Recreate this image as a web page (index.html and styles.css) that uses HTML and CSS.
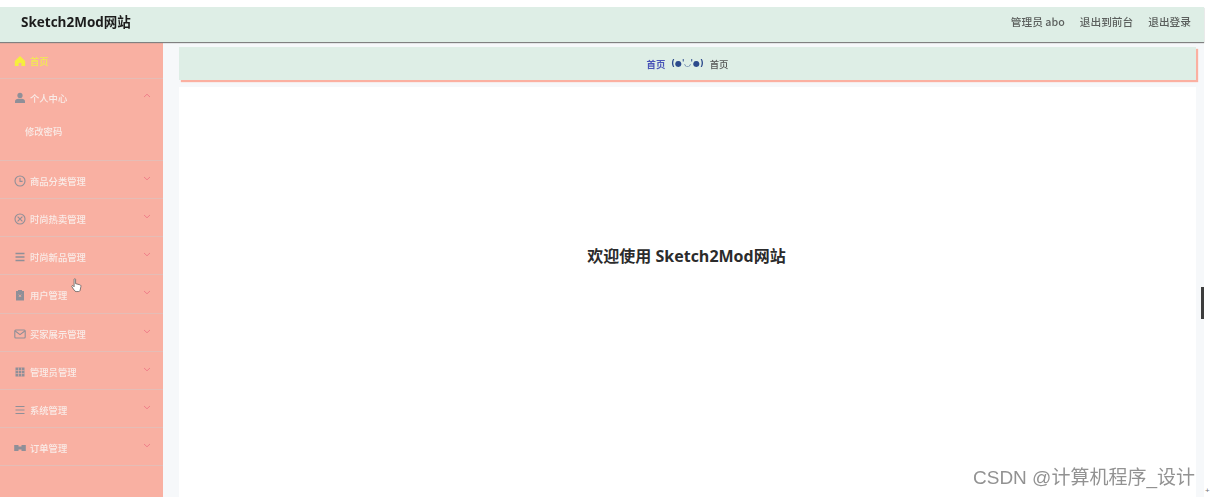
FILE: index.html
```html
<!DOCTYPE html>
<html lang="zh">
<head>
<meta charset="utf-8">
<title>Sketch2Mod网站</title>
<link rel="stylesheet" href="styles.css">
</head>
<body>
<div class="page">
  <header class="topbar">
    <div class="brand">Sketch2Mod网站</div>
    <nav class="toplinks"><span>管理员 abo</span><span>退出到前台</span><span>退出登录</span></nav>
  </header>
  <div class="body-row">
    <aside class="sidebar">
      <div class="item home">
        <svg class="ico" viewBox="0 0 12 12"><path d="M6 1 L11.2 6 V11 H7.4 V8 H4.6 V11 H.8 V6 Z" fill="#f6ee3c"/></svg>
        <span>首页</span>
      </div>
      <div class="group">
        <div class="item open">
          <svg class="ico" viewBox="0 0 12 12"><circle cx="6" cy="3.4" r="2.6" fill="#8f8f98"/><path d="M1 11 V9.2 C1 7.4 3 6.8 6 6.8 S11 7.4 11 9.2 V11 Z" fill="#8f8f98"/></svg>
          <span>个人中心</span>
          <svg class="chev" viewBox="0 0 8 5"><path d="M1 4 L4 1.2 L7 4"/></svg>
        </div>
        <div class="sub">修改密码</div>
      </div>
      <div class="item">
        <svg class="ico" viewBox="0 0 12 12"><circle cx="6" cy="6" r="5" class="ln"/><path d="M6 3 V6.4 H8.6" class="ln"/></svg>
        <span>商品分类管理</span>
        <svg class="chev" viewBox="0 0 8 5"><path d="M1 1 L4 3.8 L7 1"/></svg>
      </div>
      <div class="item">
        <svg class="ico" viewBox="0 0 12 12"><circle cx="6" cy="6" r="5" class="ln"/><path d="M3.6 3.6 L8.4 8.4 M8.4 3.6 L3.6 8.4" class="ln"/></svg>
        <span>时尚热卖管理</span>
        <svg class="chev" viewBox="0 0 8 5"><path d="M1 1 L4 3.8 L7 1"/></svg>
      </div>
      <div class="item">
        <svg class="ico" viewBox="0 0 12 12"><path d="M1.5 2.5 H10.5 M1.5 6 H10.5 M1.5 9.5 H10.5" class="ln thick"/></svg>
        <span>时尚新品管理</span>
        <svg class="chev" viewBox="0 0 8 5"><path d="M1 1 L4 3.8 L7 1"/></svg>
      </div>
      <div class="item">
        <svg class="ico" viewBox="0 0 12 12"><path d="M2 2 H4 V1 H8 V2 H10 V11.4 H2 Z" fill="#8f8f98"/><path d="M4.8 5.6 L7.2 8 M7.2 5.6 L4.8 8" stroke="#f7b0a2" stroke-width=".8"/></svg>
        <span>用户管理</span>
        <svg class="chev" viewBox="0 0 8 5"><path d="M1 1 L4 3.8 L7 1"/></svg>
      </div>
      <div class="item">
        <svg class="ico" viewBox="0 0 12 12"><rect x=".8" y="2" width="10.4" height="8" rx="1" class="ln"/><path d="M1.2 3 L6 6.6 L10.8 3" class="ln"/></svg>
        <span>买家展示管理</span>
        <svg class="chev" viewBox="0 0 8 5"><path d="M1 1 L4 3.8 L7 1"/></svg>
      </div>
      <div class="item">
        <svg class="ico" viewBox="0 0 12 12"><path d="M1.5 1.5 H10.5 V10.5 H1.5 Z" fill="#8f8f98"/><path d="M4.5 1.5 V10.5 M7.5 1.5 V10.5 M1.5 4.5 H10.5 M1.5 7.5 H10.5" stroke="#f7b0a2" stroke-width=".6"/></svg>
        <span>管理员管理</span>
        <svg class="chev" viewBox="0 0 8 5"><path d="M1 1 L4 3.8 L7 1"/></svg>
      </div>
      <div class="item">
        <svg class="ico" viewBox="0 0 12 12"><path d="M1.5 2.5 H10.5 M1.5 6 H10.5 M1.5 9.5 H10.5" class="ln"/></svg>
        <span>系统管理</span>
        <svg class="chev" viewBox="0 0 8 5"><path d="M1 1 L4 3.8 L7 1"/></svg>
      </div>
      <div class="item">
        <svg class="ico" viewBox="0 0 12 12"><path d="M.2 3 H4.5 V4.4 H7.5 V3 H11.8 V9 H7.5 V7.6 H4.5 V9 H.2 Z" fill="#8f8f98"/></svg>
        <span>订单管理</span>
        <svg class="chev" viewBox="0 0 8 5"><path d="M1 1 L4 3.8 L7 1"/></svg>
      </div>
    </aside>
    <main class="main">
      <div class="crumb"><b>首页</b><i>(●'◡'●)</i><span>首页</span></div>
      <section class="welcome"><h1>欢迎使用 Sketch2Mod网站</h1></section>
    </main>
  </div>
</div>
<svg class="hand" viewBox="0 0 12 16"><path d="M3.4 1.4 C3.4 .4 5 .4 5 1.4 V6 L9.6 7.2 C10.6 7.5 11 8.2 10.8 9.2 L10 13 C9.8 14.2 9 14.6 8 14.6 H5.6 C4.6 14.6 4 14 3.4 13 L1 9.4 C.4 8.4 1.6 7.6 2.4 8.4 L3.4 9.4 Z" fill="#fff" stroke="#555" stroke-width=".8"/></svg>
<div class="scroll-thumb"></div>
<div class="watermark">CSDN @计算机程序_设计</div>
<div class="resize-mark">+</div>
</body>
</html>
```
FILE: styles.css
```css
* { box-sizing: border-box; }
html, body { margin: 0; height: 497px; overflow: hidden; background: #fff; }
body { font-family: "Noto Sans CJK SC", "Open Sans", sans-serif; }
.page { width: 1204px; height: 497px; padding-top: 7px; display: flex; flex-direction: column; }
.topbar {
  height: 35px; flex: none; background: #deeee6; display: flex; align-items: center;
  justify-content: space-between; padding: 0 13px 7px 21px;
  box-shadow: 0 1px 1px #808080; position: relative; z-index: 2;
}
.brand { font-family: "Open Sans", "Noto Sans CJK SC", sans-serif; font-size: 13.5px; font-weight: 700; color: #1c1c1c; filter: blur(.3px); }
.toplinks { display: flex; gap: 15px; font-size: 10.7px; font-weight: 500; color: #5b5f5d; filter: blur(.3px); }
.body-row { flex: 1; display: flex; min-height: 0; background: #f6f8fa; }
.sidebar { width: 163px; flex: none; background: #f9b0a2; padding-top: 1px; }
.item {
  height: 38.125px; display: flex; align-items: center; padding: 3px 12px 0 14px;
  font-size: 9.3px; font-weight: 500; color: #f9ece8; border-bottom: 1px solid #e5bdb6; gap: 4px;
}
.item span { filter: blur(.35px); }
.item.home { height: 36px; color: #f2ec4f; padding-top: 0; }
.item.open { border-bottom: 0; height: 38px; padding-top: 0; }
.group { height: 82px; border-bottom: 1px solid #e5bdb6; }
.sub { font-size: 9.3px; font-weight: 500; color: #f9ece8; padding: 7px 0 0 25px; filter: blur(.35px); }
.ico { width: 12px; height: 12px; flex: none; filter: blur(.3px); }
.ln { fill: none; stroke: #8f8f98; stroke-width: 1.1; }
.thick { stroke-width: 1.6; }
.chev { width: 8px; height: 5px; margin-left: auto; margin-top: -5px; flex: none; }
.chev path { fill: none; stroke: #f0808a; stroke-width: 1; }
.main { flex: 1; min-width: 0; padding: 5px 8px 0 16px; display: flex; flex-direction: column; }
.crumb {
  height: 33px; flex: none; background: #deeee6; display: flex; align-items: center; justify-content: center;
  font-size: 9.4px; font-weight: 500; color: #555; gap: 6px; box-shadow: 2px 2px 1px #fbb0a1;
}
.crumb b { color: #4a55b8; font-weight: 700; filter: blur(.25px); }
.crumb i { font-style: normal; color: #2c4a8c; font-weight: 700; font-family: "DejaVu Sans", sans-serif; font-size: 8px; filter: blur(.25px); }
.crumb span { filter: blur(.25px); }
.welcome { margin-top: 7px; flex: 1; background: #fff; display: flex; justify-content: center; padding-top: 158px; }
.welcome h1 { margin: 0 2px 0 0; font-family: "Open Sans", "Noto Sans CJK SC", sans-serif; font-size: 16px; line-height: 22px; font-weight: 700; color: #2b2b2b; }
.hand { position: absolute; left: 71px; top: 278px; width: 11px; height: 15px; }
.scroll-thumb { position: absolute; left: 1201px; top: 287px; width: 3px; height: 32px; background: #3d3d3d; }
.watermark { position: absolute; left: 973px; top: 466px; font-family: "Liberation Sans", "Noto Sans CJK SC", sans-serif; font-size: 19px; line-height: 24px; color: #929292; white-space: nowrap; filter: blur(.3px); }
.resize-mark { position: absolute; left: 1205px; top: 486px; font-family: "Liberation Sans", sans-serif; font-size: 8px; line-height: 10px; color: #777; }
```
